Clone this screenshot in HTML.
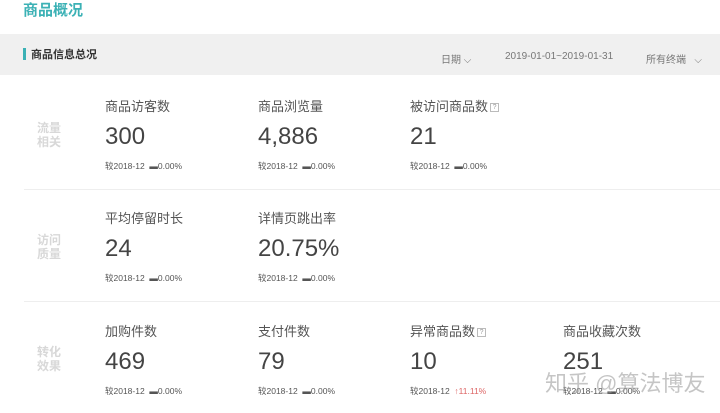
<!DOCTYPE html>
<html><head><meta charset="utf-8"><style>
*{margin:0;padding:0;box-sizing:border-box}
body{width:720px;height:413px;background:#fff;font-family:"Liberation Sans","Noto Sans CJK SC",sans-serif;position:relative;overflow:hidden;color:#333}
.a{position:absolute;white-space:nowrap}
.t{left:23px;top:-1px;font-size:15px;font-weight:bold;color:#3bb1b5}
.bar{left:0;top:34px;width:720px;height:41px;background:#f0f0f0}
.mk{left:23px;top:48px;width:3px;height:12px;background:#3bb1b5}
.bt{left:31px;top:46px;font-size:11px;font-weight:bold;color:#333}
.f{font-size:10px;color:#777;top:51px}
.sep{left:24px;width:696px;height:1px;background:#eee}
.sl{left:37px;font-size:12px;color:#d8d8d8;line-height:14px;font-weight:bold}
.lb{font-size:13px;color:#555}
.n{font-size:24px;color:#444}
.c{font-size:8.5px;color:#555}
.q{display:inline-block;width:9px;height:9px;border:1px solid #bbb;font-size:7px;line-height:7px;text-align:center;color:#999;vertical-align:2px;margin-left:2px}
</style></head><body>
<div class="a t">商品概况</div>
<div class="a bar"></div>
<div class="a mk"></div>
<div class="a bt">商品信息总况</div>
<div class="a f" style="left:441px">日期 ⌵</div>
<div class="a f" style="left:505px">2019-01-01~2019-01-31</div>
<div class="a f" style="left:646px">所有终端 &nbsp;&nbsp;⌵</div>
<div class="a sep" style="top:189px"></div>
<div class="a sep" style="top:301px"></div>

<div class="a sl" style="top:121px">流量<br>相关</div>
<div class="a sl" style="top:233px">访问<br>质量</div>
<div class="a sl" style="top:345px">转化<br>效果</div>

<div class="a lb" style="left:105px;top:96px">商品访客数</div>
<div class="a n" style="left:105px;top:123px">300</div>
<div class="a c" style="left:105px;top:160px">较2018-12 &nbsp;▬0.00%</div>
<div class="a lb" style="left:258px;top:96px">商品浏览量</div>
<div class="a n" style="left:258px;top:123px">4,886</div>
<div class="a c" style="left:258px;top:160px">较2018-12 &nbsp;▬0.00%</div>
<div class="a lb" style="left:410px;top:96px">被访问商品数<span class="q">?</span></div>
<div class="a n" style="left:410px;top:123px">21</div>
<div class="a c" style="left:410px;top:160px">较2018-12 &nbsp;▬0.00%</div>

<div class="a lb" style="left:105px;top:208px">平均停留时长</div>
<div class="a n" style="left:105px;top:235px">24</div>
<div class="a c" style="left:105px;top:272px">较2018-12 &nbsp;▬0.00%</div>
<div class="a lb" style="left:258px;top:208px">详情页跳出率</div>
<div class="a n" style="left:258px;top:235px">20.75%</div>
<div class="a c" style="left:258px;top:272px">较2018-12 &nbsp;▬0.00%</div>

<div class="a lb" style="left:105px;top:321px">加购件数</div>
<div class="a n" style="left:105px;top:348px">469</div>
<div class="a c" style="left:105px;top:385px">较2018-12 &nbsp;▬0.00%</div>
<div class="a lb" style="left:258px;top:321px">支付件数</div>
<div class="a n" style="left:258px;top:348px">79</div>
<div class="a c" style="left:258px;top:385px">较2018-12 &nbsp;▬0.00%</div>
<div class="a lb" style="left:410px;top:321px">异常商品数<span class="q">?</span></div>
<div class="a n" style="left:410px;top:348px">10</div>
<div class="a c" style="left:410px;top:385px">较2018-12 &nbsp;<span style="color:#d66">↑11.11%</span></div>
<div class="a lb" style="left:563px;top:321px">商品收藏次数</div>
<div class="a n" style="left:563px;top:348px">251</div>
<div class="a c" style="left:563px;top:385px">较2018-12 &nbsp;▬0.00%</div>
<div class="a" style="left:545px;top:366px;font-size:22px;color:rgba(150,150,150,0.55)">知乎 @算法博友</div>
</body></html>
